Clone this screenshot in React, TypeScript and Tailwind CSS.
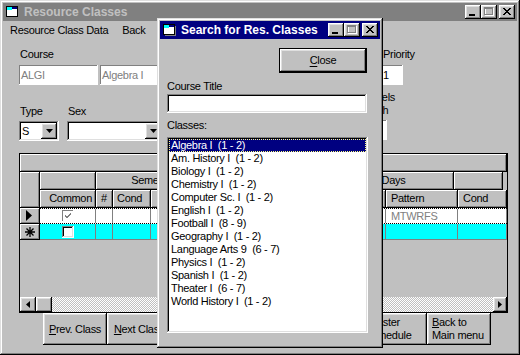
import React from "react";

const RAISED =
  "shadow-[inset_-1px_-1px_#000,inset_1px_1px_#fff,inset_-2px_-2px_#808080,inset_2px_2px_#dfdfdf]";
const WINDOW =
  "shadow-[inset_-1px_-1px_#000,inset_1px_1px_#dfdfdf,inset_-2px_-2px_#808080,inset_2px_2px_#fff]";
const SUNKEN =
  "shadow-[inset_-1px_-1px_#fff,inset_1px_1px_#808080,inset_-2px_-2px_#dfdfdf,inset_2px_2px_#000]";
const FLAT =
  "shadow-[inset_-1px_-1px_#fff,inset_1px_1px_#808080]";
const HDR =
  "bg-[#c0c0c0] border-r border-b border-black shadow-[inset_1px_1px_#fff,inset_-1px_-1px_#808080]";

function WinIcon() {
  return (
    <svg width="16" height="14" viewBox="0 0 16 14">
      <rect x="3" y="3" width="11" height="10" fill="#808080" />
      <rect x="1.5" y="1.5" width="11" height="10" fill="#fff" stroke="#000" />
      <rect x="2" y="2" width="5" height="3" fill="#00ffff" />
      <rect x="7" y="2" width="5" height="2" fill="#000080" />
    </svg>
  );
}

function TitleBtn({ kind, disabled }: { kind: "min" | "max" | "close"; disabled?: boolean }) {
  return (
    <div className={`w-[16px] h-[14px] bg-[#c0c0c0] ${RAISED} relative`}>
      <svg width="16" height="14" viewBox="0 0 16 14" className="absolute left-0 top-0">
        {kind === "min" && <rect x="4" y="9" width="6" height="2" fill="#000" />}
        {kind === "max" && disabled && (
          <g>
            <rect x="4.5" y="3.5" width="8" height="7" fill="none" stroke="#fff" />
            <rect x="4" y="3" width="9" height="1" fill="#fff" />
            <rect x="3.5" y="2.5" width="8" height="7" fill="none" stroke="#808080" />
            <rect x="3" y="2" width="9" height="2" fill="#808080" />
          </g>
        )}
        {kind === "max" && !disabled && (
          <g>
            <rect x="3.5" y="2.5" width="8" height="7" fill="none" stroke="#000" />
            <rect x="3" y="2" width="9" height="2" fill="#000" />
          </g>
        )}
        {kind === "close" && (
          <path d="M4 3 L11 10 M5 3 L12 10 M11 3 L4 10 M12 3 L5 10" stroke="#000" strokeWidth="1" />
        )}
      </svg>
    </div>
  );
}

function Field({ w, text, gray }: { w: string; text?: string; gray?: boolean }) {
  return (
    <div
      className={`${w} h-[20px] bg-white ${FLAT} flex items-center pl-[2px] ${
        gray ? "text-[#808080]" : "text-black"
      }`}
    >
      {text}
    </div>
  );
}

function DownArrow() {
  return (
    <svg width="7" height="4" viewBox="0 0 7 4">
      <polygon points="0,0 7,0 3.5,4" fill="#000" />
    </svg>
  );
}

function Combo({ w, text }: { w: string; text?: string }) {
  return (
    <div className={`${w} h-[20px] bg-white ${SUNKEN} flex items-stretch p-[2px]`}>
      <div className="flex-1 flex items-center pl-[1px]">{text}</div>
      <div className={`w-[16px] bg-[#c0c0c0] ${RAISED} flex items-center justify-center`}>
        <DownArrow />
      </div>
    </div>
  );
}

function Check({ checked, disabled }: { checked?: boolean; disabled?: boolean }) {
  return (
    <div className={`w-[12px] h-[12px] bg-white ${disabled ? FLAT : SUNKEN} relative`}>
      {checked && (
        <svg width="12" height="12" viewBox="0 0 12 12" className="absolute left-0 top-0">
          <path d="M3 5 L5 7 L9 3 M3 6 L5 8 L9 4" stroke={disabled ? "#808080" : "#000"} fill="none" />
        </svg>
      )}
    </div>
  );
}

function Grid() {
  const cellBase = "h-full border-r border-[#808080] shrink-0";
  const cols = ["w-[56px]", "w-[17px]", "w-[38px]", "w-[65px]", "w-[61px]", "w-[61px]", "w-[48px]", "w-[72px]", "w-[49px]"];
  return (
    <div className="w-[489px] h-[160px] border border-black flex flex-col bg-[#c0c0c0] overflow-hidden">
      <div className={`h-[18px] shrink-0 ${HDR}`} />
      <div className="flex h-[36px] shrink-0">
        <div className={`w-[20px] h-[36px] shrink-0 ${HDR}`} />
        <div className="flex flex-col">
          <div className="flex h-[18px]">
            <div className={`w-[56px] ${HDR}`} />
            <div className={`w-[116px] ${HDR} flex items-center justify-center`}>Semester</div>
            <div className={`w-[122px] ${HDR}`} />
            <div className={`w-[120px] ${HDR} flex items-center justify-center`}>Days</div>
            <div className={`w-[49px] ${HDR}`} />
          </div>
          <div className="flex h-[18px]">
            <div className={`w-[56px] ${HDR} flex items-center justify-end pr-[3px]`}>Common</div>
            <div className={`w-[17px] ${HDR} flex items-center justify-center`}>#</div>
            <div className={`w-[38px] ${HDR} flex items-center pl-[4px]`}>Cond</div>
            <div className={`w-[65px] ${HDR}`} />
            <div className={`w-[61px] ${HDR}`} />
            <div className={`w-[61px] ${HDR}`} />
            <div className={`w-[48px] ${HDR}`} />
            <div className={`w-[72px] ${HDR} flex items-center pl-[5px]`}>Pattern</div>
            <div className={`w-[49px] ${HDR} flex items-center pl-[5px]`}>Cond</div>
          </div>
        </div>
      </div>
      {/* row 1 */}
      <div className="flex h-[16px] shrink-0">
        <div className={`w-[20px] shrink-0 ${HDR} flex items-center justify-center`}>
          <svg width="7" height="11" viewBox="0 0 7 11">
            <polygon points="0,0 6,5.5 0,11" fill="#000" />
          </svg>
        </div>
        <div className="flex bg-white border-y border-dotted border-black">
          {cols.map((c, i) => (
            <div key={i} className={`${c} ${cellBase} flex items-center`}>
              {i === 0 && (
                <div className="w-full flex justify-center">
                  <Check checked disabled />
                </div>
              )}
              {i === 7 && <span className="pl-[5px] text-[#808080]">MTWRFS</span>}
            </div>
          ))}
        </div>
      </div>
      {/* row 2 */}
      <div className="flex h-[16px] shrink-0">
        <div className={`w-[20px] shrink-0 ${HDR} flex items-center justify-center`}>
          <svg width="10" height="10" viewBox="0 0 10 10">
            <path d="M5 0 V10 M0 5 H10 M1.5 1.5 L8.5 8.5 M8.5 1.5 L1.5 8.5" stroke="#000" strokeWidth="1.3" />
          </svg>
        </div>
        <div className="flex bg-[#00ffff] border-b border-[#808080]">
          {cols.map((c, i) => (
            <div key={i} className={`${c} ${cellBase} flex items-center`}>
              {i === 0 && (
                <div className="w-full flex justify-center">
                  <Check />
                </div>
              )}
            </div>
          ))}
        </div>
      </div>
      <div className="flex-1" />
      {/* scrollbar */}
      <div className="h-[15px] shrink-0 flex">
        <div className={`w-[16px] bg-[#c0c0c0] ${RAISED} flex items-center justify-center`}>
          <svg width="4" height="7" viewBox="0 0 4 7">
            <polygon points="4,0 0,3.5 4,7" fill="#000" />
          </svg>
        </div>
        <div className={`w-[16px] bg-[#c0c0c0] ${RAISED}`} />
        <div className="flex-1 bg-[repeating-conic-gradient(#ffffff_0_25%,#c0c0c0_0_50%)] bg-[length:2px_2px]" />
        <div className={`w-[14px] bg-[#c0c0c0] ${RAISED} flex items-center justify-center`}>
          <svg width="4" height="7" viewBox="0 0 4 7">
            <polygon points="0,0 4,3.5 0,7" fill="#000" />
          </svg>
        </div>
      </div>
    </div>
  );
}

function CmdBtn({ children, left }: { children: React.ReactNode; left?: boolean }) {
  return (
    <div
      className={`w-[64px] h-[32px] shrink-0 bg-[#c0c0c0] ${RAISED} flex items-center ${
        left ? "justify-start pl-[5px]" : "justify-center"
      } leading-[13px] whitespace-nowrap`}
    >
      <div>{children}</div>
    </div>
  );
}

const CLASSES = [
  "Algebra I  (1 - 2)",
  "Am. History I  (1 - 2)",
  "Biology I  (1 - 2)",
  "Chemistry I  (1 - 2)",
  "Computer Sc. I  (1 - 2)",
  "English I  (1 - 2)",
  "Football I  (8 - 9)",
  "Geography I  (1 - 2)",
  "Language Arts 9  (6 - 7)",
  "Physics I  (1 - 2)",
  "Spanish I  (1 - 2)",
  "Theater I  (6 - 7)",
  "World History I  (1 - 2)",
];

function Dialog() {
  return (
    <div
      className={`absolute left-[157px] top-[18px] w-[226px] h-[330px] bg-[#c0c0c0] p-[3px] ${WINDOW} flex flex-col`}
    >
      <div className="h-[18px] shrink-0 bg-[#000080] flex items-center pl-[2px] pr-[2px]">
        <WinIcon />
        <span className="ml-[3px] font-bold text-[12px] text-white tracking-normal">Search for Res. Classes</span>
        <div className="ml-auto flex items-center">
          <TitleBtn kind="min" />
          <TitleBtn kind="max" disabled />
          <div className="w-[2px]" />
          <TitleBtn kind="close" />
        </div>
      </div>
      <div className="flex flex-col pl-[7px] pr-[13px]">
        <div className="flex justify-end mt-[9px]">
          <div className="w-[88px] h-[25px] border border-black">
            <div className={`w-full h-full bg-[#c0c0c0] ${RAISED} flex items-center justify-center`}>
              <span>
                <span className="underline underline-offset-2">C</span>lose
              </span>
            </div>
          </div>
        </div>
        <div className="mt-[7px] h-[13px] leading-[13px]">Course Title</div>
        <div className={`mt-[1px] w-[200px] h-[19px] bg-white ${SUNKEN}`} />
        <div className="mt-[6px] h-[13px] leading-[13px]">Classes:</div>
        <div className={`mt-[5px] w-[201px] h-[196px] bg-white ${SUNKEN} p-[2px]`}>
          {CLASSES.map((c, i) => (
            <div
              key={c}
              className={`h-[13px] leading-[11px] whitespace-pre pl-[1px] ${
                i === 0
                  ? "bg-[#000080] text-white border border-dotted border-[#ffff80]"
                  : "border border-transparent"
              }`}
            >
              {c}
            </div>
          ))}
        </div>
      </div>
    </div>
  );
}

export default function App() {
  return (
    <div
      className={`relative w-[520px] h-[355px] bg-[#c0c0c0] p-[3px] ${WINDOW} text-[11px] text-black tracking-[-0.3px] [font-family:'Liberation_Sans',Arial,sans-serif] overflow-hidden`}
    >
      {/* Title bar */}
      <div className="h-[18px] bg-[#808080] flex items-center pl-[2px] pr-[2px]">
        <WinIcon />
        <span className="ml-[3px] font-bold text-[12px] text-[#c0c0c0] tracking-normal">Resource Classes</span>
        <div className="ml-auto flex items-center">
          <TitleBtn kind="min" />
          <TitleBtn kind="max" disabled />
          <div className="w-[2px]" />
          <TitleBtn kind="close" />
        </div>
      </div>
      {/* Menu */}
      <div className="h-[19px] flex items-center pl-[1px]">
        <span className="px-[6px]">Resource Class Data</span>
        <span className="px-[6px] ml-[2px]">Back</span>
      </div>
      {/* Form */}
      <div className="flex flex-col">
        <div className="flex mt-[8px] ml-[16px]">
          <div className="flex flex-col w-[362px]">
            <div className="h-[13px] leading-[13px] pl-[1px] mb-[4px]">Course</div>
            <div className="flex gap-[2px]">
              <Field w="w-[79px]" text="ALGI" gray />
              <Field w="w-[250px]" text="Algebra I" gray />
            </div>
          </div>
          <div className="flex flex-col">
            <div className="h-[13px] leading-[13px] pl-[2px] mb-[4px]">Priority</div>
            <Field w="w-[22px]" text="1" />
          </div>
        </div>
        <div className="flex ml-[16px]">
          <div className="flex flex-col w-[321px] pt-[20px]">
            <div className="flex h-[13px] leading-[13px] mb-[3px]">
              <span className="w-[49px] pl-[1px]">Type</span>
              <span>Sex</span>
            </div>
            <div className="flex gap-[8px]">
              <Combo w="w-[40px]" text="S" />
              <Combo w="w-[96px]" />
            </div>
          </div>
          <div className="flex flex-col pt-[6px]">
            <div className="leading-[13px] pl-[25px]">
              Levels
              <br />
              Math
            </div>
            <div className={`mt-[3px] w-[47px] h-[20px] bg-white ${FLAT}`} />
          </div>
        </div>
        <div className="mt-[12px] ml-[16px]">
          <Grid />
        </div>
        <div className="flex ml-[40px]">
          <CmdBtn>
            <span className="underline">P</span>rev. Class
          </CmdBtn>
          <CmdBtn>
            <span className="underline">N</span>ext Class
          </CmdBtn>
          <CmdBtn>
            <span className="underline">F</span>ind Class
          </CmdBtn>
          <CmdBtn>
            <span className="underline">A</span>dd Class
          </CmdBtn>
          <CmdBtn>
            <span className="underline">D</span>elete
          </CmdBtn>
          <CmdBtn left>
            <span className="underline">M</span>aster
            <br />
            Schedule
          </CmdBtn>
          <CmdBtn left>
            <span className="underline">B</span>ack to
            <br />
            Main menu
          </CmdBtn>
        </div>
      </div>
      <Dialog />
    </div>
  );
}
